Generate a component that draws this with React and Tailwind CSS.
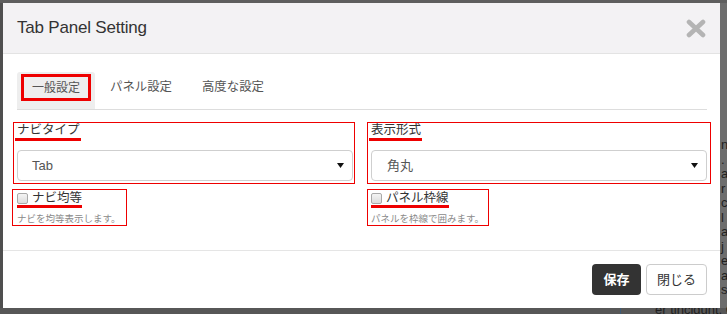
import React from 'react';

const jp = "font-['Liberation_Sans','Noto_Sans_CJK_JP',sans-serif]";

// Page content that shows through the overlay at the right and bottom edges
const behindLines = ['n', '.', 'ar', 'r', 'c', 'l', 'a', 'j', 'e', 'a', 's'];

const Caret = () => (
    <svg width="7" height="5" viewBox="0 0 7 5" className="shrink-0">
        <path d="M0 0 H7 L3.5 5 Z" fill="#111" />
    </svg>
);

const CloseIcon = () => (
    <svg width="20" height="19" viewBox="0 0 20 19">
        <path d="M3 3 L17 16 M17 3 L3 16" stroke="#b4b4b4" strokeWidth="4.6" strokeLinecap="round" />
    </svg>
);

const SelectBox = ({ value, pl }) => (
    <div className={`mt-[9px] h-[31px] rounded-[4px] border border-[#cfcfcf] bg-white flex items-center justify-between pr-[8px] ${pl}`}>
        <span className="text-[13px] text-[#555]">{value}</span>
        <Caret />
    </div>
);

const FieldLabel = ({ children }) => (
    <div className="flex">
        <span className="block border-b-[3px] border-[#ee0000] leading-[15px] text-[12.5px] text-[#333] -ml-[2px] pl-[2px] pr-px">
            {children}
        </span>
    </div>
);

const CheckGroup = ({ label, help, className }) => (
    <div className={`inline-flex flex-col border border-[#ee0000] ${className}`}>
        <div className="flex items-center gap-[4px] border-b-[3px] border-[#ee0000] self-start h-[18px] pt-[1px]">
            <span className="w-[11px] h-[11px] rounded-[2px] border border-[#a9a9a9] bg-gradient-to-b from-[#f4f4f4] to-[#dcdcdc]" />
            <span className="text-[12.5px] leading-[14px] text-[#333]">{label}</span>
        </div>
        <span className="mt-[4px] text-[9.5px] leading-[13px] text-[#8a8a8a]">{help}</span>
    </div>
);

export default function App() {
    return (
        <div className={`relative w-[727px] h-[314px] overflow-hidden bg-[#4f4f4f] ${jp}`}>
            {/* dimmed page behind the modal */}
            <div className="absolute left-[720px] top-0 w-[7px] h-[314px] bg-[#6d6d6d]" />
            <div className="absolute left-0 top-0 w-[727px] h-[3px] bg-[#5e5e5e]" />
            <div className="absolute left-0 top-[308px] w-[727px] h-[6px] bg-[#575757]" />
            <div className="absolute left-[721px] top-[138px] flex flex-col text-[13px] leading-[14.5px] text-[#1f1f1f] font-['Liberation_Sans',sans-serif]">
                {behindLines.map((t, i) => (
                    <span key={i} className="whitespace-nowrap">{t}</span>
                ))}
            </div>
            <div className="absolute left-[655px] top-[303px] whitespace-nowrap text-[13px] leading-[14px] text-[#1f1f1f] font-['Liberation_Sans',sans-serif]">
                er tincidunt. Cras
            </div>
            <div className="absolute left-[620px] top-[308px] w-px h-[6px] bg-[#3d5a75]" />

            {/* modal */}
            <div className="relative ml-[3px] mt-[3px] w-[717px] h-[305px] bg-white flex flex-col">
                <div className="h-[51px] shrink-0 bg-[#f3f2f4] border-b border-[#e3e3e3] flex items-center justify-between pl-[14px] pr-[14px]">
                    <span className="text-[17px] text-[#333] font-['Liberation_Sans',sans-serif] tracking-[-0.2px]">Tab Panel Setting</span>
                    <CloseIcon />
                </div>

                <div className="pt-[18px] pl-[14px] pr-[13px]">
                    {/* tabs */}
                    <div className="flex h-[38px] border-b border-[#dddddd]">
                        <div className="px-[4px] pt-[2px] bg-[#eeeeee] rounded-t-[3px]">
                            <span className="h-[27px] flex items-center px-[8px] border-[3px] border-[#ee0000] text-[12px] text-[#555]">一般設定</span>
                        </div>
                        {['パネル設定', '高度な設定'].map((t) => (
                            <div key={t} className="px-[4px] pt-[2px]">
                                <span className="h-[27px] flex items-center px-[8px] border-[3px] border-transparent text-[12.4px] text-[#555]">{t}</span>
                            </div>
                        ))}
                    </div>

                    {/* selects */}
                    <div className="grid grid-cols-2 gap-x-[18px] mt-[12px]">
                        <div className="-ml-[4px] -mr-[2px] border border-[#ee0000] pl-[3px] pr-px pb-[2px]">
                            <FieldLabel>ナビタイプ</FieldLabel>
                            <SelectBox value="Tab" pl="pl-[14px]" />
                        </div>
                        <div className="-ml-[4px] -mr-[4px] border border-[#ee0000] pl-[3px] pr-[3px] pb-[2px]">
                            <FieldLabel>表示形式</FieldLabel>
                            <SelectBox value="角丸" pl="pl-[15px]" />
                        </div>
                    </div>

                    {/* checkboxes */}
                    <div className="grid grid-cols-2 gap-x-[18px] mt-[5px]">
                        <div className="flex">
                            <CheckGroup label="ナビ均等" help="ナビを均等表示します。" className="-ml-[5px] pl-[4px] pr-[5px]" />
                        </div>
                        <div className="flex">
                            <CheckGroup label="パネル枠線" help="パネルを枠線で囲みます。" className="-ml-[4px] pl-[3px] pr-[4px]" />
                        </div>
                    </div>
                </div>

                {/* footer */}
                <div className="mt-auto border-t border-[#e5e5e5] h-[58px] flex items-start justify-end gap-[5px] pt-[13px] pr-[13px]">
                    <button className="h-[31px] w-[49px] rounded-[4px] bg-[#333333] text-white text-[13px] font-bold">保存</button>
                    <button className="h-[31px] w-[61px] rounded-[4px] bg-white border border-[#cccccc] text-[#333] text-[13px]">閉じる</button>
                </div>
            </div>
        </div>
    );
}
